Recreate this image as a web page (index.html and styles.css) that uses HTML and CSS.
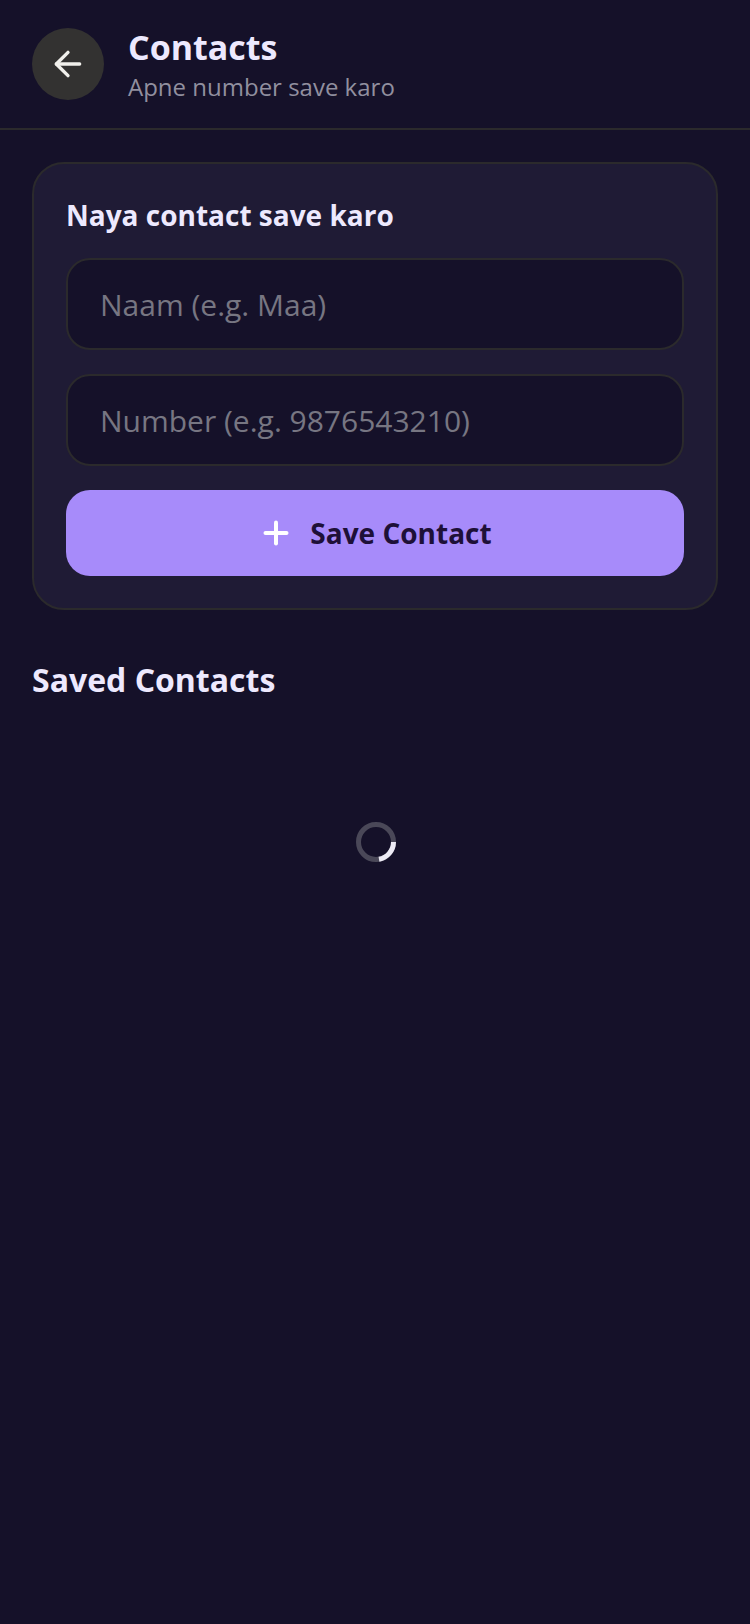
FILE: index.html
```html
<!DOCTYPE html>
<html lang="en">
<head>
    <meta charset="UTF-8">
    <meta name="viewport" content="width=device-width, initial-scale=1.0">
    <title>Contacts</title>
    <link rel="stylesheet" href="styles.css">
</head>
<body>
    <header class="header">
        <button class="back" aria-label="Back">
            <svg width="40" height="40" viewBox="0 0 24 24" fill="none" stroke="#f1f0ec" stroke-width="2" stroke-linecap="round" stroke-linejoin="round">
                <path d="M19 12H5"/>
                <path d="M12 5l-7 7 7 7"/>
            </svg>
        </button>
        <div class="header-text">
            <h1 class="title">Contacts</h1>
            <p class="subtitle">Apne number save karo</p>
        </div>
    </header>

    <main class="content">
        <section class="card">
            <h2 class="card-title">Naya contact save karo</h2>
            <input type="text" class="field" placeholder="Naam (e.g. Maa)">
            <input type="text" class="field" placeholder="Number (e.g. 9876543210)">
            <button class="save">
                <svg width="32" height="32" viewBox="0 0 32 32" fill="none" stroke="#ffffff" stroke-width="4" stroke-linecap="round">
                    <path d="M18 5.5v21"/>
                    <path d="M7.5 16h21"/>
                </svg>
                <span>Save Contact</span>
            </button>
        </section>

        <h2 class="section-title">Saved Contacts</h2>

        <div class="loader">
            <svg width="40" height="40" viewBox="0 0 40 40" fill="none" stroke-width="5">
                <circle cx="20" cy="20" r="17.5" stroke="#4a4858"/>
                <path d="M37.5 20A17.5 17.5 0 0 1 23 37.2" stroke="#edebf5"/>
            </svg>
        </div>
    </main>
</body>
</html>
```

FILE: styles.css
```css
* {
    margin: 0;
    padding: 0;
    box-sizing: border-box;
    font-family: 'Open Sans', 'Noto Sans', sans-serif;
}

body {
    min-height: 100vh;
    background: #151129;
}

.header {
    display: flex;
    align-items: center;
    gap: 24px;
    height: 130px;
    padding: 0 32px;
    border-bottom: 2px solid #2b2a2c;
}

.back {
    display: flex;
    justify-content: center;
    align-items: center;
    width: 72px;
    height: 72px;
    border: none;
    border-radius: 50%;
    background: #333231;
}

.title {
    font-size: 34px;
    line-height: 46px;
    font-weight: 700;
    color: #ede9fe;
}

.subtitle {
    font-size: 24px;
    line-height: 34px;
    color: #918f9f;
}

.content {
    display: flex;
    flex-direction: column;
    padding: 32px 32px 0;
}

.card {
    display: flex;
    flex-direction: column;
    gap: 24px;
    padding: 32px;
    border: 2px solid #2b2a2c;
    border-radius: 32px;
    background: #1f1b35;
}

.card-title {
    font-size: 28px;
    line-height: 38px;
    font-weight: 700;
    color: #ede9fe;
}

.field {
    height: 92px;
    padding: 0 32px;
    border: 2px solid #2b2a2c;
    border-radius: 24px;
    background: #151129;
    font-size: 30px;
    color: #ede9fe;
    outline: none;
}

.field::placeholder {
    color: #777682;
    opacity: 1;
}

.save {
    display: flex;
    justify-content: center;
    align-items: center;
    gap: 20px;
    height: 86px;
    border: none;
    border-radius: 24px;
    background: #a78bfa;
}

.save span {
    font-size: 28px;
    font-weight: 700;
    color: #1e1038;
}

.section-title {
    margin-top: 48px;
    font-size: 32px;
    line-height: 44px;
    font-weight: 700;
    color: #ede9fe;
}

.loader {
    display: flex;
    justify-content: center;
    margin: 120px 0 0 2px;
}
```
